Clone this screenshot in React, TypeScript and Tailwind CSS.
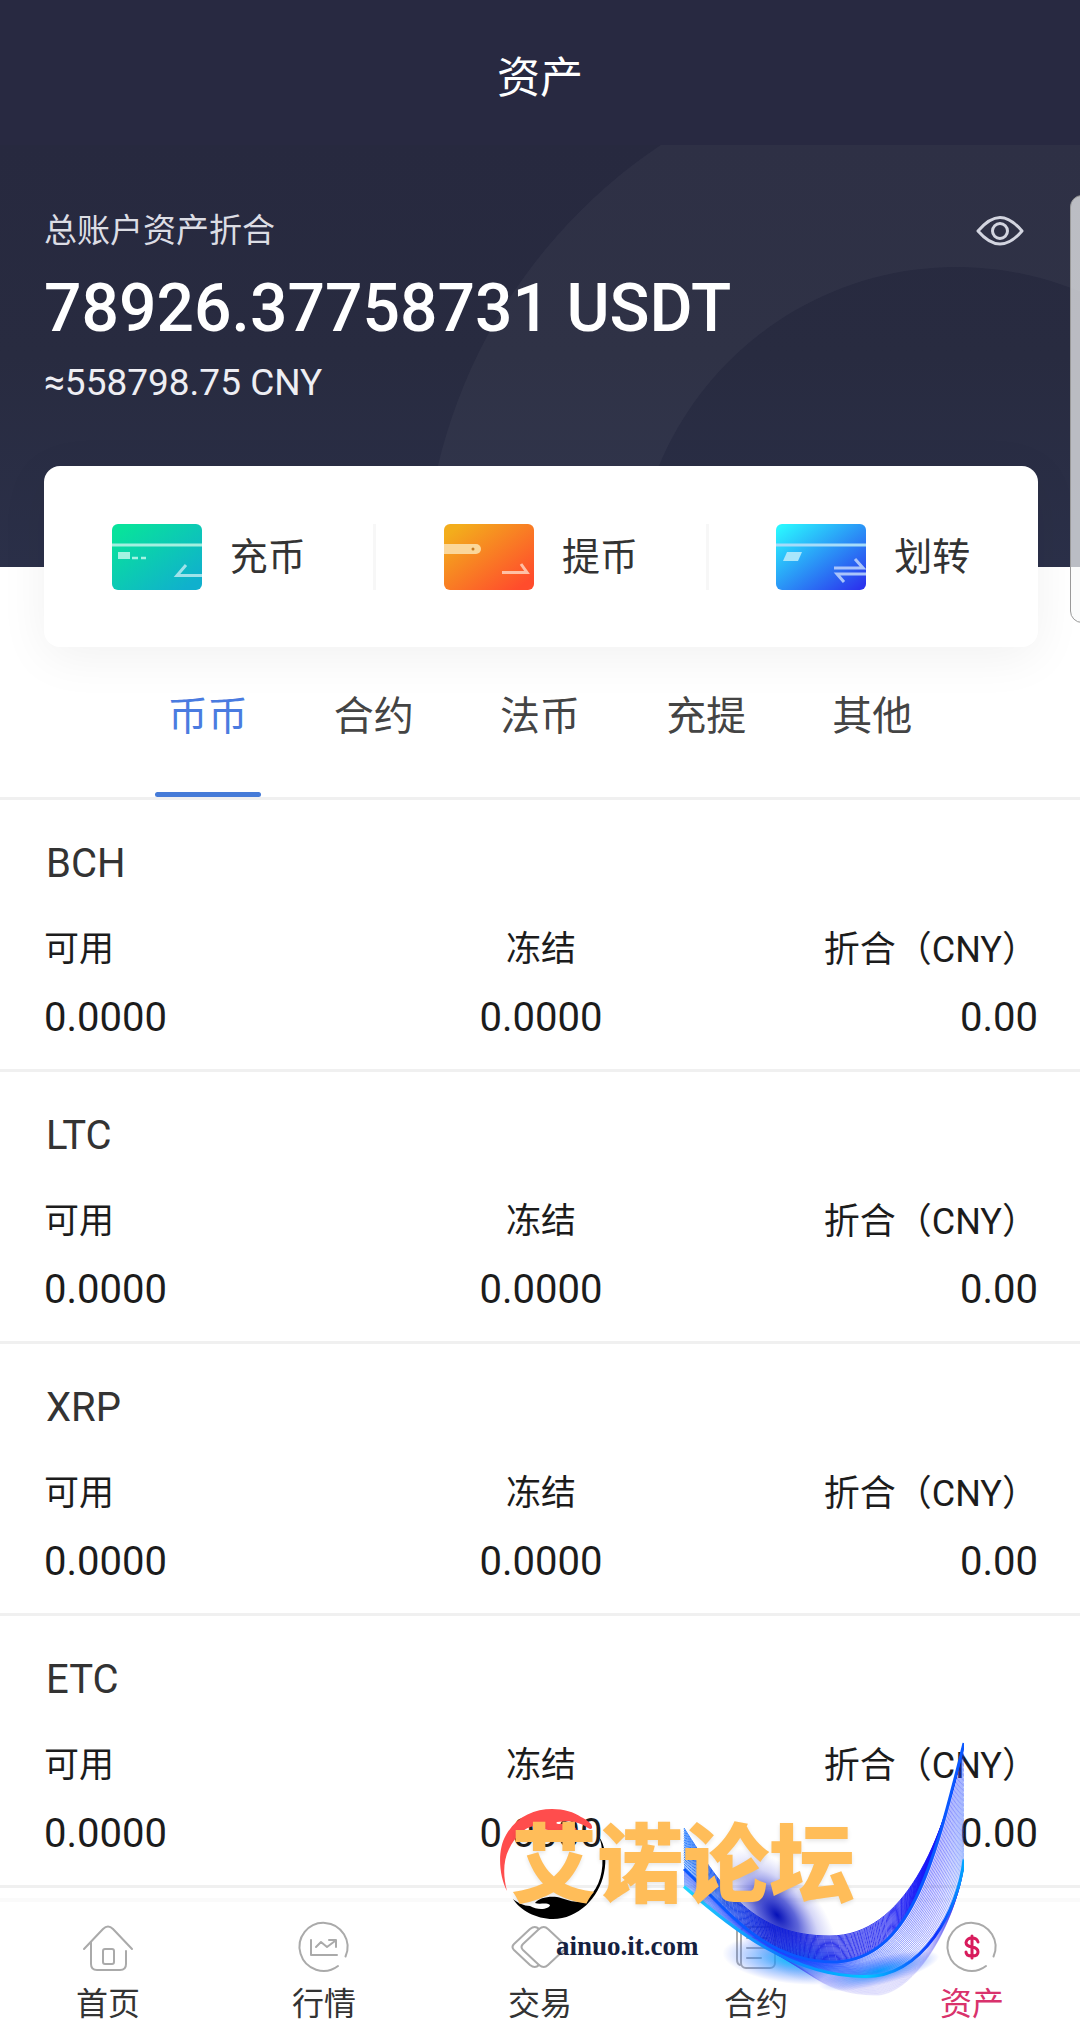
import { useState } from 'react'

type Coin = {
  name: string
  available: string
  frozen: string
  cny: string
}

const coins: Coin[] = [
  { name: 'BCH', available: '0.0000', frozen: '0.0000', cny: '0.00' },
  { name: 'LTC', available: '0.0000', frozen: '0.0000', cny: '0.00' },
  { name: 'XRP', available: '0.0000', frozen: '0.0000', cny: '0.00' },
  { name: 'ETC', available: '0.0000', frozen: '0.0000', cny: '0.00' },
]

const tabs = ['币币', '合约', '法币', '充提', '其他']

function EyeIcon() {
  return (
    <svg viewBox="0 0 48 32" className="h-8 w-12" fill="none" stroke="#d3d5e0" strokeWidth="3">
      <path d="M2 16C8 9 15 2.500 24 2.500S40 9 46 16C40 23 33 29 24 29S8 23 2 16Z" strokeLinejoin="round" />
      <circle cx="24" cy="16" r="7.500" />
    </svg>
  )
}

function DepositIcon() {
  return (
    <svg viewBox="0 0 90 66" className="h-[66px] w-[90px]">
      <defs>
        <linearGradient id="deposit" x1="0" y1="0" x2="1" y2="1">
          <stop offset="0.1" stopColor="#08e29c" />
          <stop offset="0.9" stopColor="#10b0cd" />
        </linearGradient>
      </defs>
      <rect width="90" height="66" rx="6" fill="url(#deposit)" />
      <path d="M0 21H90" stroke="#a4efe0" strokeWidth="3" />
      <rect x="6" y="28" width="12" height="7" fill="#a4f3e2" />
      <path d="M20 34H26M29 34H34" stroke="#a4f3e2" strokeWidth="2.500" />
      <path d="M90 51.500H65L74 41" fill="none" stroke="#9fe3ea" strokeWidth="3" />
    </svg>
  )
}

function WithdrawIcon() {
  return (
    <svg viewBox="0 0 90 66" className="h-[66px] w-[90px]">
      <defs>
        <linearGradient id="withdraw" x1="0" y1="0" x2="1" y2="1">
          <stop offset="0.1" stopColor="#f3ad1c" />
          <stop offset="0.9" stopColor="#ff4c2c" />
        </linearGradient>
      </defs>
      <rect width="90" height="66" rx="6" fill="url(#withdraw)" />
      <path d="M0 20H32a5 5 0 0 1 0 10H0Z" fill="#fbd79a" />
      <circle cx="29" cy="25" r="1.500" fill="#c77a20" />
      <path d="M58 48.500H83L77 40" fill="none" stroke="#ffbfa5" strokeWidth="3" />
    </svg>
  )
}

function TransferIcon() {
  return (
    <svg viewBox="0 0 90 66" className="h-[66px] w-[90px]">
      <defs>
        <linearGradient id="transfer" x1="0" y1="0" x2="1" y2="1">
          <stop offset="0.05" stopColor="#2af5ff" />
          <stop offset="0.95" stopColor="#2b35ee" />
        </linearGradient>
      </defs>
      <rect width="90" height="66" rx="6" fill="url(#transfer)" />
      <path d="M0 21H90" stroke="#a6dcfa" strokeWidth="3" />
      <path d="M11 28H26L22 37H7Z" fill="#a9e6fb" />
      <path d="M58 44H87L79 35M90 50H61L68 58" fill="none" stroke="#a9c4fb" strokeWidth="3" />
    </svg>
  )
}

const actions = [
  { label: '充币', icon: <DepositIcon /> },
  { label: '提币', icon: <WithdrawIcon /> },
  { label: '划转', icon: <TransferIcon /> },
]

const navItems = [
  {
    label: '首页',
    icon: (
      <>
        <path d="M1 27L20 7Q25 2 30 7L49 27" />
        <path d="M8 20V42Q8 48 14 48H37Q43 48 43 42V29" />
        <rect x="20" y="27" width="11" height="15" rx="2" />
      </>
    ),
  },
  {
    label: '行情',
    icon: (
      <>
        <path d="M46.500 34.500A24 24 0 1 0 39 44" />
        <path d="M12 18V33H38M17 25L22 20L28 25L36 19M30 18H37V25" />
      </>
    ),
  },
  {
    label: '交易',
    icon: (
      <>
        <path d="M24 7Q20 3 15 7L-1 22Q-4 25 -1 28L15 43Q20 47 24 43" />
        <path d="M24 7Q29 3 33 7L49 22Q52 25 49 28L33 43Q29 47 24 43L8 28Q5 25 8 22Z" />
      </>
    ),
  },
  {
    label: '合约',
    icon: (
      <>
        <rect x="10" y="5" width="34" height="41" rx="5" />
        <path d="M6 7V37Q6 42 9 43M16 16H36M16 26H36M16 36H30" />
      </>
    ),
  },
  {
    label: '资产',
    active: true,
    icon: (
      <>
        <path d="M46.500 34.500A24 24 0 1 0 39 44" />
        <path
          d="M31 20Q30 16 25 16T19 20.500Q19 24 25 25T31 30Q31 34 25 34T19 30M25 14V36"
          stroke="#d81b5c"
          strokeWidth="3"
        />
      </>
    ),
  },
]

// Control points of the ribbon's edges: start, c1, c2, middle, c3, c4, end
const upper = [10, 87, 50, 150, 80, 195, 156, 195, 230, 195, 270, 100, 290, 2]
const ridge = [10, 128, 50, 165, 90, 223, 163, 221, 235, 216, 258, 130, 290, 2]
const lower = [10, 146, 60, 190, 120, 236, 192, 236, 250, 236, 285, 170, 290, 122]
const tail = [125, 224, 150, 248, 175, 254, 205, 254, 240, 250, 280, 190, 290, 122]

function blend(a: number[], b: number[], t: number) {
  const p = a.map((v, i) => (v + (b[i] - v) * t).toFixed(1))
  return `M${p.slice(0, 2).join(' ')}C${p.slice(2, 8).join(' ')}C${p.slice(8).join(' ')}`
}

const steps = Array.from({ length: 25 }, (_, i) => i / 24)

function Wave() {
  return (
    <svg viewBox="0 0 290 260" className="h-[260px] w-[290px]" fill="none">
      <defs>
        <radialGradient id="glow">
          <stop offset="0" stopColor="#0510b8" />
          <stop offset="0.35" stopColor="#2a34cc" stopOpacity="0.75" />
          <stop offset="0.7" stopColor="#5a60e0" stopOpacity="0.25" />
          <stop offset="1" stopColor="#6a70e8" stopOpacity="0" />
        </radialGradient>
        <radialGradient id="cyan">
          <stop offset="0" stopColor="#00c8ff" />
          <stop offset="0.4" stopColor="#2090ff" stopOpacity="0.6" />
          <stop offset="1" stopColor="#4060ff" stopOpacity="0" />
        </radialGradient>
        <linearGradient id="strand" gradientUnits="userSpaceOnUse" x1="10" y1="0" x2="290" y2="0">
          <stop offset="0" stopColor="#0a6cff" />
          <stop offset="0.3" stopColor="#0a1ad8" />
          <stop offset="1" stopColor="#1a14ff" />
        </linearGradient>
        <linearGradient id="edge" gradientUnits="userSpaceOnUse" x1="10" y1="0" x2="290" y2="0">
          <stop offset="0" stopColor="#20d8ff" />
          <stop offset="0.35" stopColor="#0a78ff" />
          <stop offset="0.65" stopColor="#00c8ff" />
          <stop offset="0.9" stopColor="#1030ff" />
          <stop offset="1" stopColor="#00a8ff" />
        </linearGradient>
      </defs>
      <ellipse cx="103" cy="174" rx="42" ry="80" fill="url(#glow)" transform="rotate(-40 103 174)" />
      <ellipse cx="120" cy="219" rx="72" ry="24" fill="url(#cyan)" transform="rotate(6 120 219)" />
      <ellipse cx="205" cy="230" rx="62" ry="14" fill="url(#cyan)" transform="rotate(-14 205 230)" />
      {steps.map((t) => (
        <g key={t} strokeWidth="1">
          <path d={blend(lower, tail, t)} stroke="#3a34f0" strokeOpacity={t > 0.95 ? 0.1 : 0.12} />
          <path d={blend(ridge, lower, t)} stroke="url(#edge)" strokeOpacity="0.2" />
          <path d={blend(ridge, lower, t)} stroke="#2a20ff" strokeOpacity={0.45 - t * 0.25} />
          <path d={blend(upper, ridge, t)} stroke="url(#strand)" strokeOpacity="0.85" />
        </g>
      ))}
      <path d={blend(ridge, lower, 0)} stroke="#0a58ff" strokeWidth="3" />
      <path d={blend(ridge, lower, 0.97)} stroke="url(#edge)" strokeWidth="3" />
    </svg>
  )
}

function ForumMark() {
  return (
    <div className="pointer-events-none absolute bottom-0 left-1/2 h-[300px] w-[480px]" aria-hidden="true">
      <div className="absolute left-[134px] top-[4px]">
        <Wave />
      </div>
      <svg viewBox="0 0 110 112" className="absolute -left-[42px] top-[71px] h-[112px] w-[110px]">
        <path
          d="M9 83C1 68 -1 42 8 27C18 9 36 1 54 1C66 1 76 4 83 9C89 12 95 16 94 20Q93 22 90 20C82 14 72 12 59 14Q57 16 62 16C72 15 79 18 79 24C73 20 70 20 65 22C56 25 46 21 37 18C26 19 17 29 11 41C5 53 5 68 9 83Z"
          fill="#ff4d4d"
        />
        <path
          d="M15 91C20 95 26 98 32 98C40 103 52 101 52 97C48 94 42 97 37 95C41 90 50 88 59 89C68 91 80 98 90 90C102 79 106 62 104 45Q104 36 101 29C107 36 109 52 106 65C101 90 80 111 55 111C38 111 22 102 15 91Z"
          fill="#000"
        />
      </svg>
      <p
        lang="zh-CN"
        className="absolute -left-[29px] top-[70px] whitespace-nowrap text-[86px] leading-[120px] font-black text-[#ffbd59] [text-shadow:0_2px_4px_rgba(0,0,0,0.1)]"
      >
        艾诺论坛
      </p>
      <p className="absolute left-[16px] top-[193px] font-['Liberation_Serif',serif] text-[27px] leading-[32px] font-bold text-[#16213f]">
        ainuo.it.com
      </p>
    </div>
  )
}

export default function App() {
  const [tab, setTab] = useState('币币')

  return (
    <div
      lang="zh-CN"
      className="relative w-full overflow-hidden bg-white font-['Roboto','Noto_Sans_CJK_SC',sans-serif] text-[#1c1c1c]"
    >
      <header className="flex h-[145px] items-center justify-center bg-[#282941] pt-[10px]">
        <h1 className="text-[43px] leading-[60px] text-white">资产</h1>
      </header>

      {/* Balance */}
      <section className="relative h-[422px] overflow-hidden bg-linear-to-b from-[#27293f] via-[#282b40] to-[#2b3049]">
        <svg className="absolute right-0 top-0 h-[422px] w-[660px]" viewBox="0 0 660 422">
          <path
            d="M537 -90a534 534 0 1 0 1 0ZM537 122a322 322 0 1 1 -1 0Z"
            fill="#fff"
            fillOpacity="0.035"
            fillRule="evenodd"
          />
        </svg>
        <div className="relative pt-[62px] pr-[42px] pl-11">
          <div className="flex items-center justify-between pr-[14px]">
            <p className="text-[33px] leading-[48px] text-[#dcdde4]">总账户资产折合</p>
            <button type="button" aria-label="显示资产">
              <EyeIcon />
            </button>
          </div>
          <p className="mt-3 text-[66px] leading-[84px] font-medium text-white">78926.37758731 USDT</p>
          <p className="mt-1 text-[37px] leading-[56px] text-[#eeeef3]">≈558798.75 CNY</p>
        </div>
      </section>

      {/* Actions */}
      <div className="relative -mt-[101px] mr-[42px] ml-11 flex h-[181px] items-center rounded-2xl bg-white shadow-[0_10px_50px_rgba(0,0,0,0.06)]">
        {actions.map((action, i) => (
          <div
            key={action.label}
            className={i > 0 ? 'flex flex-1 border-l-[3px] border-[#f7f7f7]' : 'flex flex-1'}
          >
            <button
              type="button"
              className="flex h-[66px] flex-1 items-center justify-center gap-7 text-[38px] leading-[56px] text-[#333]"
            >
              {action.icon}
              {action.label}
            </button>
          </div>
        ))}
      </div>

      {/* Tabs */}
      <div className="border-b-[3px] border-[#f0f0f0]">
        <div role="tablist" className="mx-auto flex h-[150px] w-10/13 justify-center">
          {tabs.map((t) => (
            <button
              key={t}
              type="button"
              role="tab"
              aria-selected={t === tab}
              onClick={() => setTab(t)}
              className={
                t === tab
                  ? 'flex flex-1 flex-col items-center justify-between pt-[41px] text-[#4a7be0]'
                  : 'flex flex-1 flex-col items-center justify-between pt-[41px] text-[#444]'
              }
            >
              <span className="text-[40px] leading-[58px]">{t}</span>
              {t === tab && <span className="h-[5px] w-[106px] rounded-sm bg-[#457bd8]" />}
            </button>
          ))}
        </div>
      </div>

      {/* Coins */}
      <ul>
        {coins.map((coin) => (
          <li key={coin.name} className="h-[272px] border-b-[3px] border-[#f0f0f0] pt-9 pr-[42px] pl-11">
            <h2 className="px-[2px] text-[40px] leading-[56px] text-[#333]">{coin.name}</h2>
            <dl className="mt-[30px] grid grid-cols-3">
              <div>
                <dt className="text-[35px] leading-[56px]">可用</dt>
                <dd className="mt-3 text-[40px] leading-[56px]">{coin.available}</dd>
              </div>
              <div className="text-center">
                <dt className="text-[35px] leading-[56px]">冻结</dt>
                <dd className="mt-3 text-[40px] leading-[56px]">{coin.frozen}</dd>
              </div>
              <div className="text-right">
                <dt className="text-[36px] leading-[56px]">折合（CNY）</dt>
                <dd className="mt-3 text-[40px] leading-[56px]">{coin.cny}</dd>
              </div>
            </dl>
          </li>
        ))}
      </ul>

      <nav className="mt-[10px] flex h-[139px] border-t-4 border-[#fafafa] bg-white pt-5">
        {navItems.map((item) => (
          <a
            key={item.label}
            href="#"
            className={
              item.active
                ? 'flex flex-1 flex-col items-center text-[#d9326c]'
                : 'flex flex-1 flex-col items-center text-[#333]'
            }
          >
            <svg
              viewBox="0 0 50 50"
              className="size-[50px] overflow-visible"
              fill="none"
              stroke="#aaa"
              strokeWidth="2"
              strokeLinecap="round"
              strokeLinejoin="round"
            >
              {item.icon}
            </svg>
            <span className="mt-2 text-[32px] leading-[48px]">{item.label}</span>
          </a>
        ))}
      </nav>

      <ForumMark />

      {/* Edge panel handle */}
      <div className="absolute top-[195px] -right-[14px] h-[428px] w-6 rounded-xl border border-[#999] bg-[#f8f9fa]/70" />
    </div>
  )
}
